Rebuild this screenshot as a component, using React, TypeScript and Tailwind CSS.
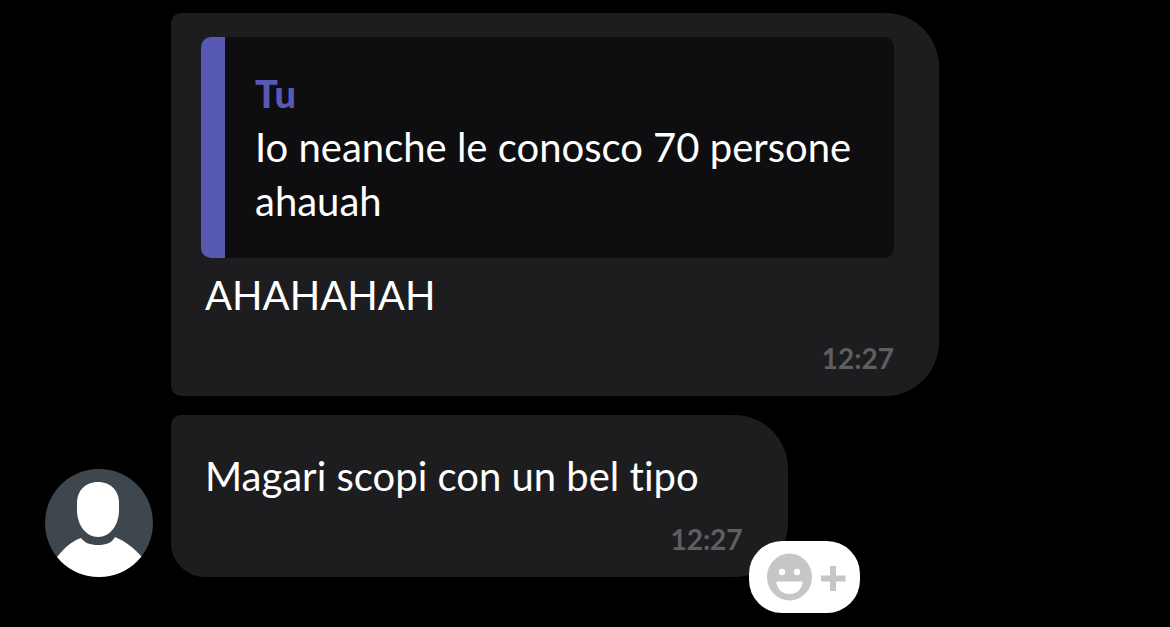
import type { ReactNode } from "react";
import { clsx } from "clsx";

interface Quote {
  author: string;
  text: string;
}

interface Message {
  id: number;
  text: string;
  time: string;
  quote?: Quote;
}

const messages: Message[] = [
  {
    id: 1,
    text: "AHAHAHAH",
    time: "12:27",
    quote: { author: "Tu", text: "Io neanche le conosco 70 persone ahauah" },
  },
  { id: 2, text: "Magari scopi con un bel tipo", time: "12:27" },
];

function Avatar() {
  return (
    <svg viewBox="0 0 108 108" className="size-[108px]" aria-hidden="true">
      <clipPath id="avatar-clip">
        <circle cx="54" cy="54" r="54" />
      </clipPath>
      <g clipPath="url(#avatar-clip)">
        <rect width="108" height="108" fill="#3e464e" />
        <path
          d="M53 13C66 13 74 22 74 34V41C74 56 65 68 53 68S32 56 32 41V34C32 22 40 13 53 13Z"
          fill="#fff"
        />
        <path
          d="M12 88C19 79 27 72 36 69C40 74 45 76 53 76S67 74 70 68C80 72 89 79 97 88L90 108H18Z"
          fill="#fff"
        />
      </g>
    </svg>
  );
}

function ReactionButton() {
  return (
    <button
      type="button"
      aria-label="Reazione"
      className="absolute -right-[72px] -bottom-9 flex h-[72px] items-center rounded-[33px] bg-white pr-3.5 pl-[18px]"
    >
      <svg width="79" height="48" viewBox="0 0 79 48" aria-hidden="true">
        <ellipse cx="22.5" cy="24" rx="22.5" ry="23.5" fill="#c6c6c7" />
        <circle cx="15" cy="19" r="3.2" fill="#fff" />
        <circle cx="30" cy="19" r="3.2" fill="#fff" />
        <path
          d="M10.500 28.500H34.500Q36 28.500 35.700 30C34 37 29.500 41 22.500 41S11 37 9.300 30Q9 28.500 10.500 28.500Z"
          fill="#fff"
        />
        <path d="M63 13h6v9.500h9.500v6H69V38h-6v-9.500h-9v-6h9Z" fill="#c6c6c7" />
      </svg>
    </button>
  );
}

function QuoteBlock({ author, text }: Quote) {
  return (
    <blockquote className="rounded-[10px] border-l-24 border-[#5759b3] bg-[#0e0e10] pt-[29px] pr-8 pb-[30px] pl-[30px]">
      <p className="text-[38px] font-black text-[#5759b3]">{author}</p>
      <p>{text}</p>
    </blockquote>
  );
}

interface BubbleProps {
  message: Message;
  last: boolean;
  children?: ReactNode;
}

function Bubble({ message, last, children }: BubbleProps) {
  return (
    <div
      className={clsx(
        "relative w-fit max-w-[768px] rounded-l-[10px] rounded-r-[54px] bg-[#1d1d1f] pr-[45px] pb-5 pl-[30px]",
        message.quote ? "pt-6" : "pt-[34px]",
        last && "rounded-bl-[34px]",
      )}
    >
      {message.quote && <QuoteBlock {...message.quote} />}
      <p className={clsx("pr-11 pl-1", message.quote && "mt-2.5")}>
        {message.text}
      </p>
      <time className="mt-[18px] block text-right text-[28px] leading-9 font-bold text-[#5f5f62]">
        {message.time}
      </time>
      {children}
    </div>
  );
}

export default function App() {
  return (
    <main className="min-h-screen bg-black pt-[13px] pr-4 pb-[50px] pl-[45px] font-['Lato',sans-serif] text-[40px] leading-[54px] text-white [font-variant-ligatures:none]">
      <div className="flex items-end gap-[18px]">
        <Avatar />
        <div className="flex min-w-0 flex-1 flex-col gap-[19px]">
          {messages.map((message, i) => {
            const last = i === messages.length - 1;
            return (
              <Bubble key={message.id} message={message} last={last}>
                {last && <ReactionButton />}
              </Bubble>
            );
          })}
        </div>
      </div>
    </main>
  );
}
